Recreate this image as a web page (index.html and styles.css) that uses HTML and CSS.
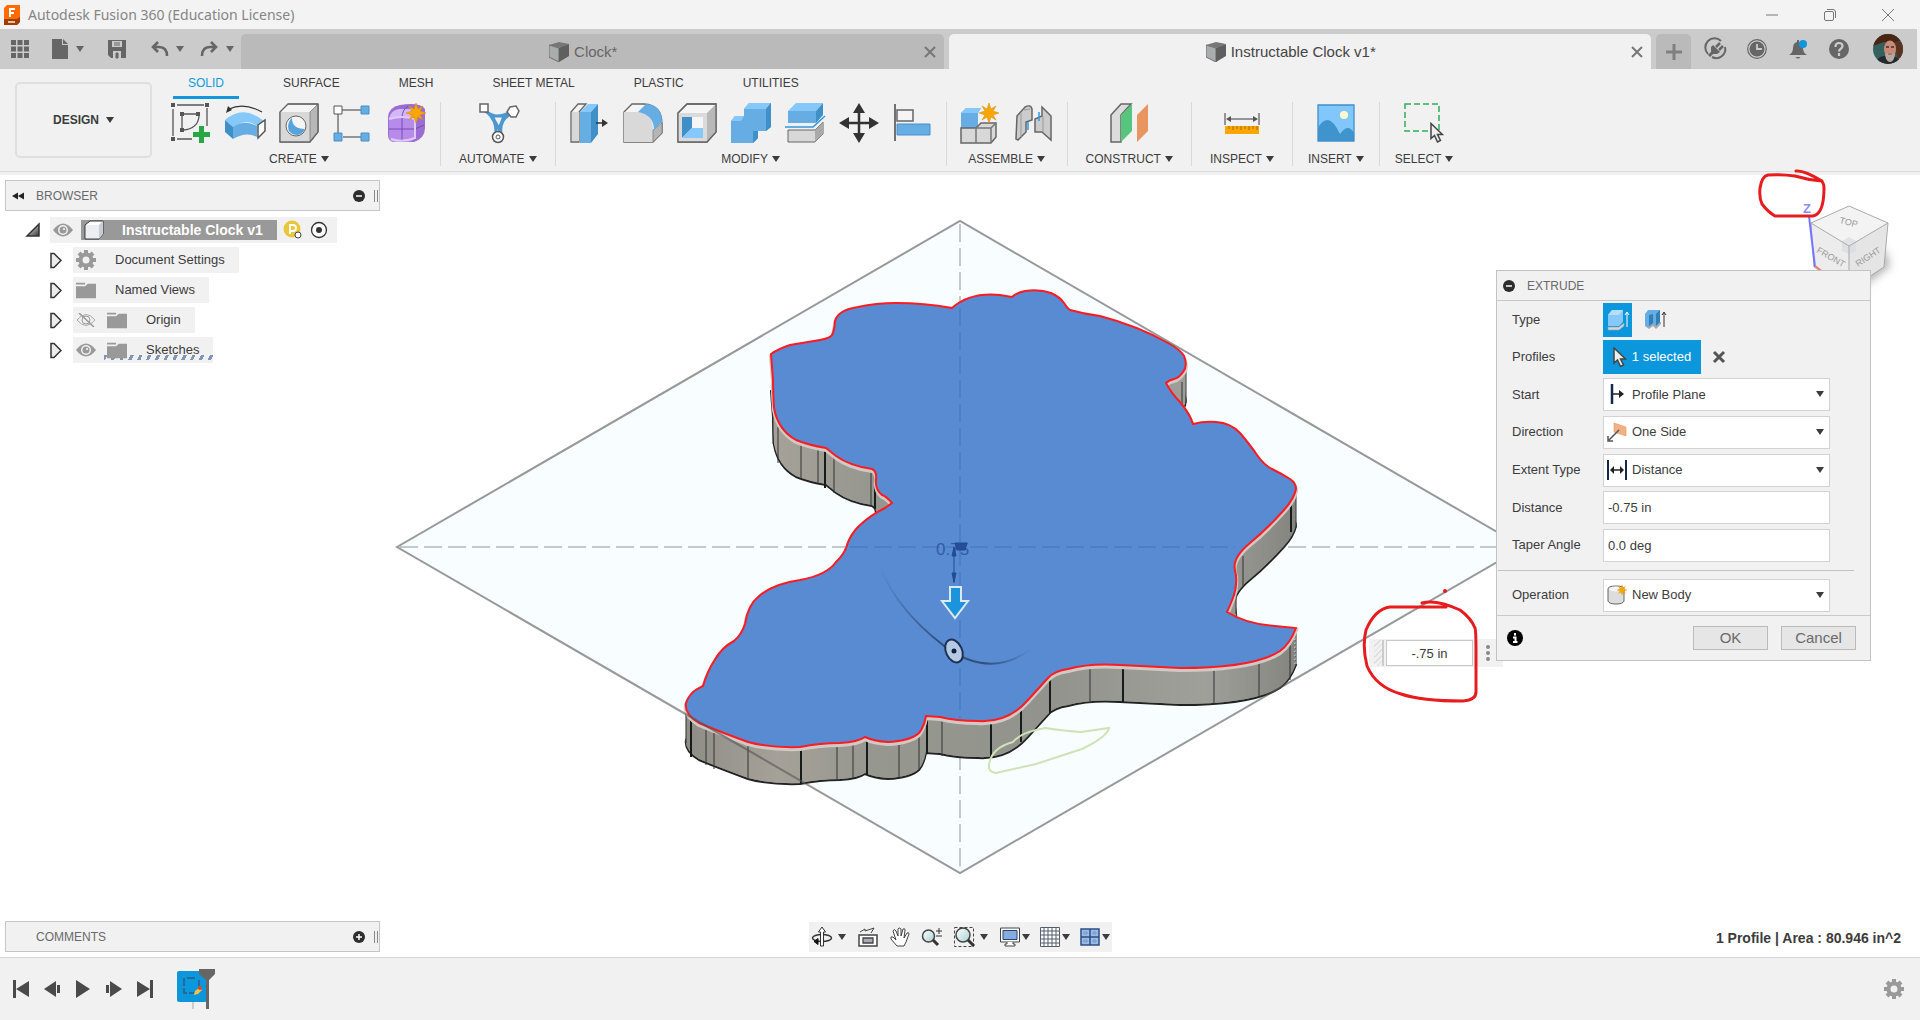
FILE: index.html
```html
<!DOCTYPE html>
<html lang="en">
<head>
<meta charset="utf-8">
<title>Autodesk Fusion 360 (Education License)</title>
<link rel="stylesheet" href="styles.css">
</head>
<body>
<svg class="defs" aria-hidden="true">
  <defs>
    <linearGradient id="steel" x1="0" y1="0" x2="1" y2="1"><stop offset="0" stop-color="#fff"/><stop offset="1" stop-color="#333"/></linearGradient>
    <linearGradient id="wall" x1="0" x2="1"><stop offset="0" stop-color="#8e8d86"/><stop offset=".15" stop-color="#a5a198"/><stop offset=".3" stop-color="#96978f"/><stop offset=".6" stop-color="#92938c"/><stop offset=".85" stop-color="#9fa099"/><stop offset="1" stop-color="#84857e"/></linearGradient>
    <linearGradient id="lens" x1="0" y1="0" x2="1" y2="1"><stop offset="0" stop-color="#fff"/><stop offset="1" stop-color="#a9cfd3"/></linearGradient>
    <linearGradient id="fade" x1="0" x2="1"><stop offset="0" stop-color="#304f7c" stop-opacity="0"/><stop offset=".4" stop-color="#304f7c"/><stop offset=".7" stop-color="#304f7c"/><stop offset="1" stop-color="#304f7c" stop-opacity="0"/></linearGradient>
    <symbol id="caret" viewBox="0 0 8 6"><path d="M0 0h8L4 6z" fill="currentColor"/></symbol>
    <symbol id="close" viewBox="0 0 12 12"><path d="M1 1l10 10M11 1L1 11" stroke="currentColor" stroke-width="2"/></symbol>
    <symbol id="star" viewBox="0 0 20 20"><path d="M10 0l2 6 5-3-3 5 6 2-6 2 3 5-5-3-2 6-2-6-5 3 3-5-6-2 6-2-3-5 5 3z" fill="#f9a602" stroke="#d98b00" stroke-width=".5"/></symbol>
    <symbol id="cube" viewBox="0 0 20 20"><path d="M0 3l10-3 10 2-9 4z" fill="#777"/><path d="M0 3l10 3v14L0 15z" fill="#a9adad" stroke="#6f6f6f"/><path d="M10 6l10-4v12l-10 6z" fill="#5f5f5f"/></symbol>
    <symbol id="folder" viewBox="0 0 22 18"><path d="M0 1h10v2H0zM0 5h10l3-3h9v16H0z" fill="#999"/></symbol>
    <symbol id="eye" viewBox="0 0 20 14"><path d="M0 7Q10-6 20 7 10 20 0 7z" fill="#999"/><circle cx="10" cy="7" r="5" fill="#f1f1f1"/><circle cx="10" cy="7" r="3.5" fill="#999"/><circle cx="11" cy="6" r="1" fill="#fff"/></symbol>
    <symbol id="eye-off" viewBox="0 0 20 14"><path d="M1 7Q10-4 19 7 10 18 1 7z" fill="none" stroke="#aaa"/><circle cx="10" cy="7" r="4" fill="none" stroke="#999"/><path d="M3 0l15 14" stroke="#999" stroke-width="1.5"/></symbol>
    <symbol id="gear" viewBox="0 0 20 20"><circle cx="10" cy="10" r="5.5" fill="none" stroke="#999" stroke-width="4"/><path d="M10 0v4M10 16v4M0 10h4M16 10h4M3 3l3 3M14 14l3 3M17 3l-3 3M3 17l3-3" stroke="#999" stroke-width="4"/></symbol>
    <symbol id="branch" viewBox="0 0 12 16"><path d="M1 1h3l7 7-7 7H1z" fill="#ececec" stroke="#333" stroke-width="1.5"/></symbol>
    <symbol id="minus" viewBox="0 0 12 12"><circle cx="6" cy="6" r="6" fill="#2d2d2d"/><path d="M3 6h6" stroke="#fff" stroke-width="1.5"/></symbol>
    <symbol id="plus" viewBox="0 0 12 12"><circle cx="6" cy="6" r="6" fill="#2d2d2d"/><path d="M3 6h6M6 3v6" stroke="#fff" stroke-width="1.5"/></symbol>
    <symbol id="pointer" viewBox="0 0 14 20"><path d="M1 1v15l3.500-3 3 6.500 3-1.500-3-6h5z" fill="#eee" stroke="#444" stroke-width="1.500"/></symbol>
  </defs>
</svg>

<div class="app">
  <header class="titlebar">
    <svg class="logo" viewBox="0 0 18 20"><path d="M1 3l3-3h13v17l-3 3H1z" fill="#ff6b00"/><path d="M1 14h13l3-2v5l-3 3H1z" fill="#a23c00"/><path d="M7 12V4h5M7 8h4" fill="none" stroke="#fff" stroke-width="2"/><path d="M5 17h7" stroke="#e9c4a8" stroke-width="2"/></svg>
    <span class="title">Autodesk Fusion 360 (Education License)</span>
    <div class="window-controls">
      <button aria-label="Minimize"><svg viewBox="0 0 12 12"><path d="M0 6h12" stroke="#777"/></svg></button>
      <button aria-label="Restore"><svg viewBox="0 0 12 12"><rect x=".5" y="2.500" width="9" height="9" rx="1.500" fill="none" stroke="#777"/><path d="M3 .5h6q2.500 0 2.500 2.500v6" fill="none" stroke="#777"/></svg></button>
      <button aria-label="Close"><svg viewBox="0 0 12 12"><path d="M0 0l12 12M12 0L0 12" stroke="#777"/></svg></button>
    </div>
  </header>

  <div class="docbar">
    <div class="quick">
      <button class="apps" aria-label="Data panel"><svg class="i20" viewBox="0 0 20 20"><path d="M1 1h5v5H1zM7.500 1h5v5h-5zM14 1h5v5h-5zM1 7.500h5v5H1zM7.500 7.500h5v5h-5zM14 7.500h5v5h-5zM1 14h5v5H1zM7.500 14h5v5h-5zM14 14h5v5h-5z" fill="#666"/></svg></button>
      <button aria-label="File"><svg class="i20" viewBox="0 0 20 20"><path d="M2 0h10v6h6v14H2z" fill="#666"/><path d="M13 0l5 5h-5z" fill="#666"/></svg><svg class="caret"><use href="#caret"/></svg></button>
      <button class="save" aria-label="Save"><svg class="i20" viewBox="0 0 20 20"><path d="M1 1h18v18H4l-3-3z" fill="#666"/><path d="M5 2h10v6H5zM6 12h8v7H6z" fill="#cbcbcb"/><path d="M7 4h6M7 6h6M9 14h2v5H9z" fill="#666" stroke="#666"/></svg></button>
      <button aria-label="Undo"><svg class="i20" viewBox="0 0 20 20"><path d="M8 3L3 8l5 5M4 8h5q8 0 8 9" fill="none" stroke="#666" stroke-width="2.600"/></svg><svg class="caret"><use href="#caret"/></svg></button>
      <button aria-label="Redo"><svg class="i20" viewBox="0 0 20 20"><path d="M11 3l5 5-5 5M15 8h-5Q2 8 2 17" fill="none" stroke="#666" stroke-width="2.600"/></svg><svg class="caret"><use href="#caret"/></svg></button>
    </div>
    <div class="doctab"><span class="doclabel"><svg class="i20"><use href="#cube"/></svg>Clock*</span><button class="x" aria-label="Close Clock"><svg><use href="#close"/></svg></button></div>
    <div class="doctab active"><span class="doclabel"><svg class="i20"><use href="#cube"/></svg>Instructable Clock v1*</span><button class="x" aria-label="Close Instructable Clock"><svg><use href="#close"/></svg></button></div>
    <button class="newtab" aria-label="New design"><svg viewBox="0 0 16 16"><path d="M8 0v16M0 8h16" stroke="#808080" stroke-width="3"/></svg></button>
    <div class="account">
      <button aria-label="Extensions"><svg class="i20" viewBox="0 0 20 20"><path d="M2 15A9 9 0 0 1 15 2M19 8A9 9 0 0 1 6 18" fill="none" stroke="#666" stroke-width="2"/><path d="M3 17l5-5" stroke="#666" stroke-width="3"/><path d="M7 6l7 7-3 2H7l-2-3V8z" fill="#666"/><path d="M10 8l4-4M13 11l4-4" stroke="#666" stroke-width="2.500"/></svg></button>
      <button aria-label="Job status"><svg class="i20" viewBox="0 0 20 20"><circle cx="10" cy="10" r="9.300" fill="none" stroke="#666" stroke-width="1.200"/><circle cx="10" cy="10" r="7.500" fill="#666"/><path d="M10 5v5h5" fill="none" stroke="#cbcbcb" stroke-width="1.800"/></svg></button>
      <button aria-label="Notifications"><svg class="i20" viewBox="0 0 20 20"><path d="M9 1h2v2q4 1 4 6 0 5 4 7H1q4-2 4-7 0-5 4-6zM7.500 18h5q-2.500 3-5 0z" fill="#666"/><circle cx="15" cy="5" r="4" fill="#0c96dc"/></svg></button>
      <button aria-label="Help"><svg class="i20" viewBox="0 0 20 20"><circle cx="10" cy="10" r="10" fill="#666"/><path d="M6.500 8q0-4 3.500-4t3.500 3q0 1.500-2 3-1.500 1-1.500 2.500M10 14v3" fill="none" stroke="#cbcbcb" stroke-width="2.200"/></svg></button>
      <button class="avatar" aria-label="Profile"><svg viewBox="0 0 30 30"><clipPath id="av"><circle cx="15" cy="15" r="15"/></clipPath><g clip-path="url(#av)"><path fill="#34605f" d="M0 0h30v30H0z"/><path fill="#4a2415" d="M0 0h30v6l-9 3-10-1-11 4z"/><path fill="#5a3220" d="M22 8h8v16h-6z"/><path fill="#222a30" d="M2 30q3-9 11-8h6q8 1 9 8z"/><ellipse cx="17" cy="15" rx="6" ry="8.500" fill="#c98b78"/><path d="M12 20q5-2 10 0-1 8-5 8t-5-8z" fill="#b9a8a0"/><path d="M13 13h3M18 13h3" stroke="#4a2b23" stroke-width="1.500"/><path d="M15 20h4" stroke="#8a4f45"/></g></svg></button>
    </div>
  </div>

  <div class="ribbon">
    <button class="workspace">DESIGN<svg class="caret"><use href="#caret"/></svg></button>
    <div class="ribbon-main">
      <nav class="ribbon-tabs">
        <a href="#" class="on">SOLID</a><a href="#">SURFACE</a><a href="#">MESH</a><a href="#">SHEET METAL</a><a href="#">PLASTIC</a><a href="#">UTILITIES</a>
      </nav>
      <div class="groups">
        <div class="group"><div class="tools">
          <button aria-label="Create Sketch"><svg viewBox="0 0 40 40"><path d="M6 2h27M36 5v18M2 6v27M6 36h15M13 11h13M11 13v13M12 27Q27 26 28 13" fill="none" stroke="#555" stroke-width="1.300"/><path d="M0 0h4v4H0zM34 0h4v4h-4zM0 34h4v4H0zM9 9h4v4H9zM25 9h4v4h-4zM9 25h4v4H9z" fill="#555"/><path d="M28 23h5v6h6v5h-6v6h-5v-6h-6v-5h6z" fill="#27a844"/></svg></button>
          <button aria-label="Revolve"><svg viewBox="0 0 40 40"><path d="M4 6q15-7 33 3" fill="none" stroke="#333" stroke-width="1.300"/><path d="M1 10L3 3l4 4z" fill="#333"/><path d="M0 17q18-16 39 1l-7 5q-12-9-23 2z" fill="#87c8fa"/><path d="M0 17l8 7v12l-8-7z" fill="#3f8fc9"/><path d="M8 24q12-8 24-1v11q-11-6-24 2z" fill="#66ade3"/><path d="M33 22l7-5v11l-7 7z" fill="#fff" stroke="#555" stroke-width="1.500"/></svg></button>
          <button aria-label="Hole"><svg viewBox="0 0 40 40"><path d="M1 9l8-8h30v28L31 39H1z" fill="#f4f4f4" stroke="#666"/><path d="M1 9h30v30H1z" fill="#d8d8d8"/><path d="M31 9l8-8v28l-8 10z" fill="#b7b7b7" stroke="#666" stroke-width=".6"/><path d="M1 9l8-8h30v28L31 39H1z" fill="none" stroke="#666" stroke-width="1.300"/><circle cx="17" cy="23" r="10" fill="#f5f5f5" stroke="#666"/><path d="M13 15q0 11 13 11-3 6-9 6-8-1-8-9 1-6 4-8z" fill="#58a3db"/></svg></button>
          <button aria-label="Pattern"><svg viewBox="0 0 40 40"><path d="M8 7h20M5 10v20M10 34h18" stroke="#777" stroke-width="1.500"/><path d="M1 3h8v8H1z" fill="#fff" stroke="#555"/><path d="M28 3h8v8h-8zM1 30h8v8H1zM28 30h8v8h-8z" fill="#66ade3" stroke="#4a8fc7"/></svg></button>
          <button aria-label="Create Form"><svg viewBox="0 0 40 40"><path d="M1 14Q2 4 13 2q20-3 25 4v19q0 10-11 14H8q-7 0-7-7z" fill="#9b6cd2"/><path d="M2 15q2-8 10-9h16q4 0 0 6-4 4-6 3z" fill="#d3b6f5"/><path d="M2 15h26v16q0 8-7 8H8q-6 0-6-6z" fill="#b68bea"/><path d="M15 15v24M2 26h26M28 26l9-4M15 15q0-8 6-12" fill="none" stroke="#7a4ab5"/><path d="M2 16q13-4 26 0M4 36q11 4 24-1V16" fill="none" stroke="#e0caf8" stroke-width="2"/><use href="#star" x="19" y="0" width="20" height="20"/></svg></button>
        </div><button class="glabel">CREATE<svg class="caret"><use href="#caret"/></svg></button></div>
        <div class="group"><div class="tools">
          <button aria-label="Automated Modeling"><svg viewBox="0 0 40 40"><path d="M7 8q7 5 12 5 7 0 13-4M9 9q10 9 9 22M31 12q-10 6-8 20M14 13h12l-5 13z" fill="none" stroke="#4b97cf" stroke-width="3"/><circle cx="20" cy="34" r="5.500" fill="#fff" stroke="#555" stroke-width="1.500"/><circle cx="20" cy="34" r="2" fill="none" stroke="#555"/><path d="M2 1h8v8H2zM29 9l3-5 6-1 3 5-3 6h-5z" fill="#fff" stroke="#666" stroke-width="1.500"/></svg></button>
        </div><button class="glabel">AUTOMATE<svg class="caret"><use href="#caret"/></svg></button></div>
        <div class="group"><div class="tools">
          <button aria-label="Press Pull"><svg viewBox="0 0 40 40"><path d="M10 39H2V9l7-8h8l-7 8z" fill="#f3f3f3" stroke="#666" stroke-width="1.300"/><path d="M3 9h7v29H3z" fill="#d8d8d8"/><path d="M11 9l8-8h10l-7 8z" fill="#87c8fa"/><path d="M11 9h11v31H11z" fill="#66ade3"/><path d="M22 9l7-8v30l-7 9z" fill="#3f8fc9"/><path d="M27 20h8" stroke="#333" stroke-width="1.500"/><path d="M33 16l6 4-6 4z" fill="#333"/></svg></button>
          <button aria-label="Fillet"><svg viewBox="0 0 40 40"><path d="M1 9l8-8h12q18 1 18 20v9l-9 9H1z" fill="#f5f5f5" stroke="#666" stroke-width="1.300"/><path d="M1 9h13q16 1 16 18v12H1z" fill="#d9d9d9"/><path d="M30 27l9-7v10l-9 9z" fill="#b5b5b5" stroke="#777" stroke-width=".7"/><path d="M15 9l8-8q16 1 16 18l-8 8q0-15-16-18z" fill="#66ade3"/></svg></button>
          <button aria-label="Shell"><svg viewBox="0 0 40 40"><path d="M1 10l9-9h29v28l-9 10H1z" fill="#f5f5f5" stroke="#666" stroke-width="1.300"/><path d="M1 10h29v29H1z" fill="#dadada"/><path d="M30 10l9-9v28l-9 10z" fill="#b8b8b8"/><path d="M1 10l9-9h29v28l-9 10H1z" fill="none" stroke="#666" stroke-width="1.300"/><path d="M5 14h21v21H5z" fill="#f5f5f5"/><path d="M5 14h10v11L5 35z" fill="#3f8fc9"/><path d="M5 35l10-10h11v10z" fill="#87c8fa"/></svg></button>
          <button aria-label="Combine"><svg viewBox="0 0 40 40"><path d="M0 18l4-5h9V6l5-6h22v24l-5 4h-8v7l-5 5H0z" fill="#66ade3"/><path d="M13 6l5-6h22l-5 6zM0 18l4-5h9l-3 5z" fill="#87c8fa"/><path d="M35 6l5-6v24l-5 4zM22 28h5v7l-5 5z" fill="#3f8fc9"/></svg></button>
          <button aria-label="Split Body"><svg viewBox="0 0 40 40"><path d="M3 8l8-8h27l-7 8z" fill="#87c8fa"/><path d="M3 8h28v12H3z" fill="#66ade3"/><path d="M31 8l7-8v12l-7 8z" fill="#3f8fc9"/><path d="M0 24h28l12-11" fill="none" stroke="#3396df" stroke-width="1.500"/><path d="M3 27h27l8-8v12l-8 8H3z" fill="#d8d8d8" stroke="#666"/><path d="M30 27l8-8v12l-8 8z" fill="#aaa"/></svg></button>
          <button aria-label="Move"><svg viewBox="0 0 40 40"><path d="M20 6v28M6 20h28" stroke="#333" stroke-width="2.500"/><path d="M20 0l6 10H14zM20 40l6-10H14zM0 20l10-6v12zM40 20l-10-6v12z" fill="#333"/></svg></button>
          <button aria-label="Align"><svg viewBox="0 0 40 40"><path d="M2 1v37" stroke="#444" stroke-width="1.500"/><path d="M4 7h16v11H4z" fill="#f5f5f5" stroke="#666" stroke-width="1.500"/><path d="M4 21h33v11H4z" fill="#66ade3" stroke="#4b90c8"/></svg></button>
        </div><button class="glabel">MODIFY<svg class="caret"><use href="#caret"/></svg></button></div>
        <div class="group"><div class="tools">
          <button aria-label="New Component"><svg viewBox="0 0 40 40"><path d="M1 10l5-5h15l-3 5v15H1z" fill="#66ade3"/><path d="M1 10l5-5h15l-3 5z" fill="#87c8fa"/><path d="M1 25h15l5-5h15v14l-5 6H1z" fill="#d8d8d8" stroke="#666" stroke-width="1.500"/><path d="M16 25h15v15M31 25l5-5M16 25v15" fill="none" stroke="#777" stroke-width="1.500"/><use href="#star" x="19" y="0" width="20" height="20"/></svg></button>
          <button aria-label="Joint"><svg viewBox="0 0 40 40"><path d="M3 13l8-9q6-3 7 2v11l-6 2v10l-8 8-2-1z" fill="#ccc" stroke="#666" stroke-width="1.500"/><path d="M28 4l9 9v24l-9-8h-7V16l7-3z" fill="#ccc" stroke="#666" stroke-width="1.500"/><path d="M7 10v24M10 7l6-1M29 13v16" fill="none" stroke="#999"/><path d="M14 19v8M25 9v9" stroke="#2b9ae5" stroke-width="1.500"/></svg></button>
        </div><button class="glabel">ASSEMBLE<svg class="caret"><use href="#caret"/></svg></button></div>
        <div class="group"><div class="tools">
          <button aria-label="Offset Plane"><svg viewBox="0 0 40 40"><path d="M2 39V12L12 1h10L12 12v27z" fill="#dcdcdc" stroke="#666" stroke-width="1.500"/><path d="M12 12L23 1v27L12 39z" fill="#58c57e"/><path d="M28 12L39 1v27L28 39z" fill="#e8955f"/></svg></button>
        </div><button class="glabel">CONSTRUCT<svg class="caret"><use href="#caret"/></svg></button></div>
        <div class="group"><div class="tools">
          <button aria-label="Measure"><svg viewBox="0 0 40 40"><path d="M3 10v12M37 10v12M6 16h28" stroke="#777" stroke-width="1.500"/><path d="M4 16l5-3v6zM36 16l-5-3v6z" fill="#555"/><path d="M3 23h34v8H3z" fill="#f9a602"/><path d="M7 23v3M11 23v4M15 23v3M19 23v4M23 23v3M27 23v4M31 23v3M35 23v4" stroke="#a86b00"/></svg></button>
        </div><button class="glabel">INSPECT<svg class="caret"><use href="#caret"/></svg></button></div>
        <div class="group compact"><div class="tools">
          <button aria-label="Insert Canvas"><svg viewBox="0 0 40 40"><path d="M2 2h36v36H2z" fill="#82c7fc"/><path d="M2 25q4-8 10-8 5 0 12 14 5-7 8-6 3 0 6 5v8H2z" fill="#4094cd"/><circle cx="28" cy="12" r="4" fill="#fffbd1"/><path d="M2 2h36v36H2z" fill="none" stroke="#3f8fc9" stroke-width="1.300"/></svg></button>
        </div><button class="glabel">INSERT<svg class="caret"><use href="#caret"/></svg></button></div>
        <div class="group compact"><div class="tools">
          <button aria-label="Select"><svg viewBox="0 0 40 40"><path d="M1 1h34v27H1z" fill="none" stroke="#2fae5c" stroke-width="1.500" stroke-dasharray="6 3"/><use href="#pointer" x="26" y="19" width="14" height="21"/></svg></button>
        </div><button class="glabel">SELECT<svg class="caret"><use href="#caret"/></svg></button></div>
      </div>
    </div>
  </div>

  <main class="canvas">
    <svg class="scene" viewBox="0 175 1920 782" preserveAspectRatio="xMidYMid meet">
      <defs>
        <path id="top" d="M771 354Q778 349 790 345 808 342 820 340 832 338 833 333 835 326 835 321 838 310 858 307 876 303 896 303 924 303 952 308 970 292 1000 295L1012 297Q1016 293 1025 291 1040 289 1051 293 1060 297 1064 303 1067 308 1070 310 1084 314 1100 316 1138 326 1168 343 1181 350 1184 356 1188 366 1183 372 1179 378 1174 379 1169 380 1166 383 1172 394 1180 402 1190 414 1193 424 1204 421 1216 422 1231 423 1240 433 1251 446 1257 455 1264 465 1272 469 1282 474 1290 479 1296 483 1296 489 1294 499 1284 510 1266 530 1250 543 1232 558 1235 570 1238 582 1234 595 1230 606 1227 612 1246 624 1275 626L1296 628Q1290 644 1280 651 1254 668 1180 668 1140 666 1120 665 1090 663 1068 669 1054 671 1048 678 1038 689 1028 700 1008 723 978 721 956 721 940 717L926 716Q924 727 919 733 910 741 888 742 873 741 865 737 858 742 840 743 820 743 800 747 770 748 748 742 718 731 699 723 684 714 686 703 689 694 697 689L703 686Q707 672 714 661 722 647 734 641 742 634 745 624 748 605 758 597 772 584 800 580 827 575 836 562 844 554 846 548 850 534 860 525 872 514 885 508L892 503Q886 496 882 495 875 489 876 480 877 471 872 469 850 466 836 456L826 448Q808 445 796 440 778 430 774 408 773 392 773 380z"/>
      </defs>
      <path class="plane" d="M397 547L960 221l563 326-563 326z"/>
      <path class="axis" d="M400 547h1120M960 224v646"/>
      <g fill="url(#wall)">
        <use class="rim" href="#top" y="37"/><use href="#top" y="36"/><use href="#top" y="32"/><use href="#top" y="28"/><use href="#top" y="24"/><use href="#top" y="20"/><use href="#top" y="16"/><use href="#top" y="12"/><use href="#top" y="8"/><use href="#top" y="4"/>
      </g>
      <path class="seam" d="M686 706v37M706 728v37M714 732v37M748 744v36M837 745v36M853 743v35M899 743v36M919 734v36M942 720v36M1090 668v35M1214 669v36M1259 662v35M1290 644v36M1296 628v37M778 427v36M773 408v36M801 444v35M818 449v34M834 457v36M871 470v37M1182 382v22M1186 370v33M1296 490v38M1243 556v30M1236 594v20"/>
      <path class="seam bold" d="M691 719v38M801 749v35M867 741v34M927 720v34M991 723v34M1021 708v34M1050 679v34M1123 667v35M825 451v37M875 472v37M1291 502v30"/>
      <use class="lip" href="#top" y="2"/>
      <use class="face" href="#top"/>
      <path class="axis inner" d="M850 547h385M960 308v410"/>
      <path class="plane-edge" d="M397 547L960 221l563 326-563 326z"/>
      <path class="island" d="M989 765q2-17 24-23 8-10 32-14 20 3 36 4l28-4q-2 9-27 21l-46 15-40 9q-8-1-7-8z"/>
      <g class="dim"><text x="936" y="555">0.75</text><path d="M954 553v30M952 573l2 9 2-9zM952 556l2-9 2 9zM955 543h12l-2 7h-8z"/></g>
      <path class="arc" d="M879 565q18 45 64 80 8 8 24 14 34 13 64-10"/>
      <path d="M950 587h11v14h7l-13 17-13-17h8z" fill="#1c94db" stroke="#dce9f5" stroke-width="2"/>
      <ellipse cx="954" cy="651" rx="8" ry="12" transform="rotate(-25 954 651)" fill="#b5c9e4" stroke="#1d3153" stroke-width="2"/><circle cx="954" cy="651" r="2.500" fill="#12223d"/>
    </svg>

    <svg class="viewcube" viewBox="1796 195 110 95">
      <defs><filter id="soft" x="-30%" y="-30%" width="160%" height="160%"><feGaussianBlur stdDeviation="5"/></filter></defs>
      <path d="M1822 262l38 26 30-22-6-16z" fill="#aaa" filter="url(#soft)"/>
      <path d="M1811 223l38-17 39 17-39 23z" fill="#f3f3f3"/><path d="M1811 223l38 23v44l-35-23z" fill="#ececec"/><path d="M1888 223l-39 23v44l35-23z" fill="#e5e5e5"/>
      <path d="M1842 241l7-4 7 4v10l-7 3-7-3z" fill="#d5d9df" opacity=".6"/>
      <path d="M1811 223l38-17 39 17-4 44-35 23-35-23zM1811 223l38 23 39-23M1849 246v44" fill="none" stroke="#aaa"/>
      <path d="M1809 216l6 51" stroke="#7474ff" stroke-width="2"/><path d="M1815 266l8 6" stroke="#ee7b7b" stroke-width="2"/>
      <text class="z" x="1803" y="213">Z</text>
      <g class="facename"><text transform="translate(1839 223) rotate(14)">TOP</text><text transform="translate(1816 252) rotate(30)">FRONT</text><text transform="translate(1858 267) rotate(-33)">RIGHT</text></g>
    </svg>

    <aside class="side">
      <section>
        <h2 class="panelbar"><svg class="rewind" viewBox="0 0 14 8"><path d="M7 0v8L0 4zM14 0v8L7 4z" fill="#222"/></svg><span>BROWSER</span><svg class="badge"><use href="#minus"/></svg><i class="grip"></i></h2>
        <ul class="tree">
          <li class="root"><svg class="open" viewBox="0 0 14 14"><path d="M1 13L13 1v12z" fill="url(#steel)" stroke="#333" stroke-width="1.500"/></svg>
            <div class="node"><svg class="eye"><use href="#eye"/></svg><span class="rootname"><svg class="i20" viewBox="0 0 20 20"><path d="M1 5l5-4h13v13l-4 5H1z" fill="#fff" stroke="#333"/><path d="M15 5l4-4v13l-4 5z" fill="#c9ccd2"/><path d="M2 5h13v13H2z" fill="#eceef3"/></svg>Instructable Clock v1</span><svg class="i20" viewBox="0 0 20 20"><circle cx="9" cy="9" r="8.500" fill="#e8c73c"/><path d="M7 14V5h3q3 0 3 3t-3 3H7" fill="none" stroke="#fff" stroke-width="1.800"/><circle cx="15" cy="15" r="3" fill="#fff" stroke="#444"/></svg><svg class="i20" viewBox="0 0 20 20"><circle cx="10" cy="10" r="7.500" fill="#fff" stroke="#333" stroke-width="1.300"/><circle cx="10" cy="10" r="3" fill="#333"/></svg></div></li>
          <li><svg class="tw"><use href="#branch"/></svg><div class="node"><svg class="i20"><use href="#gear"/></svg><span>Document Settings</span></div></li>
          <li><svg class="tw"><use href="#branch"/></svg><div class="node"><svg class="i20"><use href="#folder"/></svg><span>Named Views</span></div></li>
          <li><svg class="tw"><use href="#branch"/></svg><div class="node"><svg class="eye"><use href="#eye-off"/></svg><svg class="i20"><use href="#folder"/></svg><span>Origin</span></div></li>
          <li><svg class="tw"><use href="#branch"/></svg><div class="node sketches"><svg class="eye"><use href="#eye"/></svg><svg class="i20"><use href="#folder"/></svg><span>Sketches</span></div></li>
        </ul>
      </section>
      <h2 class="panelbar"><svg class="rewind" viewBox="0 0 14 8"></svg><span>COMMENTS</span><svg class="badge"><use href="#plus"/></svg><i class="grip"></i></h2>
    </aside>

    <div class="navbar">
      <button aria-label="Orbit"><svg class="i20" viewBox="0 0 20 20"><ellipse cx="10" cy="11" rx="9.500" ry="3.500" fill="none" stroke="#333" stroke-width="1.500"/><path d="M8.500 19V5h-2l3.500-5 3.500 5h-2v14z" fill="#fff" stroke="#333"/><path d="M2 14.500l4-3v6z" fill="#111" stroke="#111"/></svg><svg class="caret"><use href="#caret"/></svg></button>
      <button aria-label="Look At"><svg class="i20" viewBox="0 0 20 20"><path d="M1 8h18v11H1z" fill="#fff" stroke="#444" stroke-width="1.500"/><path d="M5 11h10v5H5z" fill="#aab" stroke="#444" stroke-width="1.300"/><path d="M2 5l5-3v2l9-3-3 5" fill="none" stroke="#444"/></svg></button>
      <button aria-label="Pan"><svg class="i20" viewBox="0 0 20 20"><path d="M7 19L1 12q-1-3 2-2l3 3L3 4q1-3 3 0l2 5V2q1-2 3 0v7l2-7q2-1 2 1l-1 8 3-5q2-1 2 1l-3 8-2 4z" fill="#fff" stroke="#444"/></svg></button>
      <button aria-label="Zoom"><svg class="i20" viewBox="0 0 20 20"><circle cx="6.500" cy="9" r="6" fill="url(#lens)" stroke="#444" stroke-width="1.500"/><path d="M11 13l5 5" stroke="#333" stroke-width="3"/><path d="M14 4h6M17 1v6M14 9h6" stroke="#333"/></svg></button>
      <button aria-label="Fit"><svg class="i20" viewBox="0 0 20 20"><path d="M.5 .5h19v19H.5z" fill="none" stroke="#444" stroke-dasharray="3 2"/><circle cx="9" cy="8" r="7" fill="url(#lens)" stroke="#444" stroke-width="1.500"/><path d="M14 13l6 6" stroke="#333" stroke-width="3"/></svg><svg class="caret"><use href="#caret"/></svg></button>
      <button class="tight" aria-label="Display Settings"><svg class="i20" viewBox="0 0 20 20"><path d="M.5 1h19v14H.5z" fill="#fff" stroke="#444"/><path d="M3 3.500h14v9H3z" fill="#86ace0" stroke="#284474"/><path d="M7 15v2H5v2h10v-2h-2v-2" fill="#fff" stroke="#444"/></svg><svg class="caret"><use href="#caret"/></svg></button>
      <button class="tight" aria-label="Grid"><svg class="i20" viewBox="0 0 20 20"><path d="M.5 .5h19v19H.5z" fill="#fff"/><path d="M4 0v20M8 0v20M12 0v20M16 0v20M0 4h20M0 8h20M0 12h20M0 16h20M.5 .5h19v19H.5z" fill="none" stroke="#555e6c"/></svg><svg class="caret"><use href="#caret"/></svg></button>
      <button class="tight" aria-label="Viewports"><svg class="i20" viewBox="0 0 20 20"><path d="M1 2h18v16H1z" fill="#9bbce6" stroke="#2d4f87" stroke-width="1.500"/><path d="M10 2v16M1 10h18" stroke="#2d4f87" stroke-width="1.500"/><path d="M4 5h3v2H4zM13 5h3v2h-3zM4 13h3v2H4zM13 13h3v2h-3z" fill="none" stroke="#7597cb"/></svg><svg class="caret"><use href="#caret"/></svg></button>
    </div>
    <p class="status">1 Profile | Area : 80.946 in^2</p>

    <div class="mini"><i class="hatch"></i><input aria-label="Distance value" value="-.75 in"><svg viewBox="0 0 4 16"><circle cx="2" cy="2" r="2"/><circle cx="2" cy="8" r="2"/><circle cx="2" cy="14" r="2"/></svg></div>

    <form class="dialog">
      <h2><svg class="badge"><use href="#minus"/></svg>EXTRUDE</h2>
      <div class="fields">
        <div class="row"><span>Type</span><div class="types">
          <button type="button" class="type on" aria-label="Extrude"><svg viewBox="0 0 20 20"><path d="M0 17v3h11l5-4v-3l-5 4z" fill="#d5d5d5" stroke="#8fa5b3" stroke-width=".6"/><path d="M0 5l4-5h11v12l-4 4H0z" fill="#87c8fa"/><path d="M0 5l4-5h11l-4 5z" fill="#b5defc"/><path d="M19 17V3M17 5l2-3 2 3" fill="none" stroke="#fff"/></svg></button>
          <button type="button" class="type" aria-label="Thin Extrude"><svg viewBox="0 0 20 20"><path d="M0 16l4 3 4-3 3 3 5-5v-2H0z" fill="#aaa"/><path d="M0 4l3-4h12v12l-4 4-3-2-4 3-4-1z" fill="#66ade3"/><path d="M4 5v11l4-3V4zM11 4l4-4v12l-4 4z" fill="#2f7fb8"/><path d="M19 17V3M17 5l2-3 2 3" fill="none" stroke="#333"/></svg></button></div></div>
        <div class="row"><span>Profiles</span><div class="types"><button type="button" class="selected"><svg><use href="#pointer"/></svg>1 selected</button><button type="button" class="clear" aria-label="Clear"><svg viewBox="0 0 12 12"><path d="M1 1l10 10M11 1L1 11" stroke="#555" stroke-width="3"/></svg></button></div></div>
        <div class="row"><label for="start">Start</label><div class="pick"><svg class="i20" viewBox="0 0 20 20"><path d="M5 0v20" stroke="#14284b" stroke-width="2.500"/><path d="M6 10h9" stroke="#222" stroke-width="1.500"/><path d="M12 6l5 4-5 4z" fill="#222"/></svg><select id="start"><option>Profile Plane</option></select><svg class="caret"><use href="#caret"/></svg></div></div>
        <div class="row"><label for="direction">Direction</label><div class="pick"><svg class="i20" viewBox="0 0 20 20"><path d="M7 1l12 4v9L7 10z" fill="#f3b083" stroke="#e39b69" stroke-width=".6"/><path d="M12 8L2 18M1 14v5h5" fill="none" stroke="#555" stroke-width="1.500"/></svg><select id="direction"><option>One Side</option></select><svg class="caret"><use href="#caret"/></svg></div></div>
        <div class="row"><label for="extent">Extent Type</label><div class="pick"><svg class="i20" viewBox="0 0 20 20"><path d="M1 0v20M19 0v20" stroke="#14284b" stroke-width="2"/><path d="M4 10h12" stroke="#222" stroke-width="1.500"/><path d="M3 10l4-4v8zM17 10l-4-4v8z" fill="#222"/></svg><select id="extent"><option>Distance</option></select><svg class="caret"><use href="#caret"/></svg></div></div>
        <div class="row"><label for="distance">Distance</label><input id="distance" value="-0.75 in"></div>
        <div class="row"><label for="taper">Taper Angle</label><input id="taper" value="0.0 deg"></div>
      </div>
      <div class="operation row"><label for="operation">Operation</label><div class="pick"><svg class="i20" viewBox="0 0 20 20"><path d="M1 4q0-3 8-3t8 3v12q-1 3-8 3t-8-3z" fill="#ddd" stroke="#666"/><ellipse cx="9" cy="4" rx="7" ry="2.500" fill="#f5f5f5"/><use href="#star" x="10" y="0" width="10" height="10"/></svg><select id="operation"><option>New Body</option></select><svg class="caret"><use href="#caret"/></svg></div></div>
      <footer><svg class="info" viewBox="0 0 16 16"><circle cx="8" cy="8" r="8"/><path d="M8 3v2.500M6 7.500h2.500V12M6 12h4.500" fill="none" stroke="#fff" stroke-width="2"/></svg><button type="button">OK</button><button type="button">Cancel</button></footer>
    </form>

    <svg class="markup" viewBox="0 175 1920 782" preserveAspectRatio="xMidYMid meet"><path d="M1796 171q8-1 26 10-14-1-27-5-14-2-27-1-6 1-8 13-1 10 2 16 6 8 13 12h38q11-2 11-28 0-6-4-8M1446 607h-56q-15 2-24 23-4 16 1 36 9 21 34 28 20 7 62 7 13-1 13-9v-40q0-22-1-24-4-10-15-18-24-11-38-7"/><circle cx="1445" cy="591" r="2"/></svg>
  </main>

  <footer class="timeline">
    <div class="playback">
      <button aria-label="To start"><svg viewBox="0 0 16 18"><path d="M0 0h3v18H0zM16 1v16L3 9z"/></svg></button>
      <button aria-label="Step back"><svg viewBox="0 0 16 18"><path d="M12 1v16L0 9zM13 5h3v8h-3z"/></svg></button>
      <button aria-label="Play"><svg viewBox="0 0 16 18"><path d="M1 0v18l14-9z"/></svg></button>
      <button aria-label="Step forward"><svg viewBox="0 0 16 18"><path d="M4 1v16l12-8zM0 5h3v8H0z"/></svg></button>
      <button aria-label="To end"><svg viewBox="0 0 16 18"><path d="M0 1v16l13-8zM13 0h3v18h-3z"/></svg></button>
    </div>
    <button class="feature" aria-label="Sketch1"><svg viewBox="0 0 38 40"><path d="M16 30v10" stroke="#ccc" stroke-width="2"/><rect y="2" width="30" height="31" rx="2" fill="#0c96dc"/><path d="M7 9v15h10M10 9h10M22 11v6" fill="none" stroke="#2d5f7e" stroke-width="1.500" stroke-dasharray="8 2"/><path d="M17 26l1-4 5-4 2 3-4 4z" fill="#f2c14b"/><circle cx="23" cy="19" r="2" fill="#e5402e"/><path d="M22 0h16v5l-6 6v29h-3V11l-7-6z" fill="#666"/></svg></button>
    <button class="settings" aria-label="Timeline settings"><svg class="i20"><use href="#gear"/></svg></button>
  </footer>
</div>
</body>
</html>
```
FILE: styles.css
```css
* { box-sizing: border-box; }
body { margin: 0; background: #f1f1f1; color: #3c3c3c; font: 13px/16px "Liberation Sans", Arial, sans-serif; }
button, input, select { font: inherit; color: inherit; margin: 0; }
button { border: 0; background: none; padding: 0; display: flex; align-items: center; justify-content: center; }
h2, p, ul { margin: 0; padding: 0; font-weight: normal; }
svg { display: block; flex: none; overflow: visible; }
.defs { position: absolute; width: 0; height: 0; }
.i20 { width: 20px; height: 20px; }
.caret { width: 8px; height: 6px; }
.app { min-height: 100vh; display: flex; flex-direction: column; }

.titlebar { height: 29px; display: flex; align-items: center; padding: 0 3px; gap: 7px; background: #f3f3f3; }
.logo { width: 18px; height: 20px; }
.title { flex: 1; font: 14px/20px "Noto Sans", "Open Sans", sans-serif; color: #858585; }
.window-controls { display: flex; }
.window-controls button { width: 58px; height: 28px; }
.window-controls svg { width: 12px; height: 12px; }

.docbar { height: 40px; margin-right: 3px; padding-top: 5px; display: flex; background: #cbcbcb; color: #666; }
.quick { width: 241px; padding: 0 6px 5px; display: flex; gap: 16px; }
.quick button { gap: 6px; width: 34px; }
.quick .apps { width: 28px; }
.doctab { flex: 1; display: flex; align-items: center; padding: 0 4px 0 6px; background: #bababa; border-radius: 5px 5px 0 0; font-size: 15px; }
.doctab.active { margin-left: 5px; background: #f1f1f1; color: #444; }
.doclabel { flex: 1; display: flex; justify-content: center; gap: 5px; line-height: 20px; }
.x { width: 20px; height: 20px; color: #777; }
.x svg { width: 12px; height: 12px; }
.newtab { width: 35px; margin-left: 5px; background: #bababa; border-radius: 5px 5px 0 0; }
.newtab svg { width: 16px; height: 16px; }
.account { width: 226px; display: flex; gap: 21px; padding: 0 13px 5px 15px; }
.account button { flex: none; }
.account .avatar { margin-left: 3px; }
.avatar svg { width: 30px; height: 30px; }

.ribbon { height: 106px; display: flex; align-items: flex-start; gap: 6px; padding-left: 15px; background: #f1f1f1; border-bottom: 3px solid #f1f1f1; box-shadow: inset 0 -1px #dadada; font-size: 12px; }
.workspace { width: 137px; height: 76px; margin-top: 13px; gap: 7px; border: 2px solid #dfdfdf; border-radius: 5px; font-weight: bold; }
.ribbon-tabs { display: flex; gap: 29px; padding-left: 15px; height: 30px; }
.ribbon-tabs a { color: inherit; text-decoration: none; padding: 6px 15px 5px; border-bottom: 3px solid transparent; }
.ribbon-tabs .on { color: #0f9bdf; border-color: #1296dc; }
.groups { display: flex; padding-top: 3px; }
.group { border-right: 1px solid #d9d9d9; height: 64px; }
.group:last-child { border: 0; }
.tools { display: flex; justify-content: center; padding: 0 6px; height: 42px; }
.tools button { width: 54px; height: 42px; }
.tools svg { width: 40px; height: 40px; }
.glabel { width: 100%; height: 30px; padding: 0 18px; gap: 4px; }
.compact .glabel { padding: 0 15px; }

.canvas { position: relative; flex: 1; min-height: 600px; display: grid; grid-template-columns: 1fr auto 1fr; align-items: end; padding: 5px; background: #fff; }
.scene, .markup { position: absolute; left: 0; top: 0; width: 100%; height: 100%; }
.plane { fill: #f8feff; }
.plane-edge { fill: none; stroke: #555; stroke-opacity: .6; stroke-width: 2; }
.axis { fill: none; stroke: #c3c8c8; stroke-width: 2; stroke-dasharray: 18 6; }
.axis.inner { stroke: #4473b9; stroke-width: 1; }
.rim { stroke: #222; stroke-width: 2; }
.seam { fill: none; stroke: #333; stroke-width: 1; }
.seam.bold { stroke: #181b1b; stroke-width: 2; }
.lip { fill: none; stroke: #d3c9c4; stroke-width: 4; }
.face { fill: #598bd3; stroke: #fa1c22; stroke-width: 2; }
.island { fill: none; stroke: #cfe2b8; stroke-width: 2; }
.dim { fill: #254f99; stroke: none; }
.dim text { font: 17px "Liberation Sans", Arial, sans-serif; fill: #315ca5; }
.dim path { stroke: #204a94; }
.arc { fill: none; stroke: url(#fade); stroke-width: 2; }
.markup { pointer-events: none; fill: none; stroke: #e71c1e; stroke-width: 3; stroke-linecap: round; stroke-linejoin: round; }
.markup circle { fill: #e71c1e; stroke: none; }
.viewcube { position: absolute; right: 14px; top: 20px; width: 110px; height: 95px; }
.z { font: bold 13px "Liberation Sans", Arial, sans-serif; fill: #8d8dfa; }
.facename { font: 9px "Liberation Sans", Arial, sans-serif; fill: #999; }

.side { position: relative; width: 375px; align-self: stretch; display: flex; flex-direction: column; justify-content: space-between; }
.panelbar { height: 31px; display: flex; align-items: center; padding: 0 1px 0 6px; border: 1px solid #c6c6c6; background: #f1f1f1; color: #6a6a6a; font-size: 12px; line-height: 16px; }
.panelbar span { flex: 1; padding-left: 12px; }
.rewind { width: 12px; height: 8px; }
.badge { width: 12px; height: 12px; }
.grip { width: 4px; height: 12px; margin-left: 9px; border: solid #888; border-width: 0 1px; }
.tree { list-style: none; padding-top: 6px; display: flex; flex-direction: column; gap: 4px; }
.tree li { display: flex; align-items: center; gap: 11px; padding-left: 45px; height: 26px; }
.tree .root { padding-left: 21px; gap: 10px; }
.node { display: flex; align-items: center; gap: 11px; height: 26px; padding: 0 14px 0 3px; background: #f1f1f1; }
.node > span { padding-left: 8px; }
.eye { width: 20px; height: 14px; }
.tw { width: 12px; height: 17px; }
.open { width: 14px; height: 14px; }
.root .node { gap: 6px; padding-right: 8px; }
.root .node .rootname { display: flex; align-items: center; gap: 18px; height: 20px; margin-left: 2px; padding: 0 14px 0 3px; background: #999; color: #fff; font-weight: bold; font-size: 14px; }
.sketches { background: repeating-linear-gradient(115deg, #8194b5 0 3px, transparent 3px 8px) 31px 18px / 110px 5px no-repeat #f1f1f1; }

.navbar { position: relative; display: flex; align-items: center; gap: 12px; height: 30px; padding: 0 4px 0 3px; background: #f1f1f1; }
.navbar button { gap: 6px; height: 30px; }
.navbar .tight { gap: 2px; margin-right: -2px; }
.status { position: relative; padding: 0 14px 6px 0; text-align: right; font-weight: bold; font-size: 14px; }

.mini { position: absolute; right: 417px; top: 464px; display: flex; align-items: center; gap: 2px; width: 134px; height: 28px; padding-left: 5px; background: #f1f1f1; }
.hatch { width: 10px; height: 26px; border-right: 2px solid #ccc; background: repeating-linear-gradient(135deg, #ddd 0 1px, transparent 1px 4px); }
.mini input { width: 87px; height: 26px; border: 1px solid #c8c8c8; text-align: center; padding: 0; }
.mini svg { width: 4px; height: 16px; margin-left: 11px; fill: #888; }

.dialog { position: absolute; right: 49px; top: 95px; width: 375px; height: 391px; display: flex; flex-direction: column; border: 1px solid #c3c3c3; background: #f1f1f1; }
.dialog h2 { display: flex; align-items: center; gap: 12px; height: 30px; padding: 0 6px; border-bottom: 1px solid #c9c9c9; color: #6a6a6a; font-size: 12px; }
.fields { display: grid; grid-auto-rows: 1fr; height: 270px; margin: 0 16px 0 1px; padding-bottom: 6px; border-bottom: 1px solid #c3c3c3; }
.row { display: grid; grid-template-columns: 91px 227px; align-items: center; padding-left: 14px; }
.types { display: flex; gap: 8px; }
.type { width: 29px; height: 34px; }
.type svg { width: 20px; height: 20px; }
.on.type, .selected { background: #0c96dc; }
.selected { width: 98px; height: 34px; gap: 5px; color: #fff; }
.selected svg { width: 14px; height: 20px; }
.clear svg { width: 12px; height: 12px; }
.clear { width: 20px; color: #555; }
.pick { position: relative; }
.pick select, .row input { display: block; width: 227px; height: 33px; padding: 0 4px; border: 1px solid #d3d3d3; border-radius: 0; background: #fff; appearance: none; }
.pick select { padding-left: 28px; }
.pick .i20 { position: absolute; left: 4px; top: 6px; }
.pick .caret { position: absolute; right: 6px; top: 13px; }
.operation { height: 44px; padding: 4px 0 0 15px; }
.dialog footer { flex: 1; display: flex; align-items: center; gap: 13px; padding: 0 14px 0 10px; border-top: 1px solid #c9c9c9; }
.info { width: 16px; height: 16px; margin-right: auto; }
.dialog footer button { width: 75px; height: 24px; border: 1px solid #bbb; background: #e6e6e6; color: #6a6a6a; font-size: 15px; }

.timeline { height: 63px; display: flex; align-items: center; padding: 0 16px 0 13px; border-top: 1px solid #d6d6d6; background: #f1f1f1; }
.playback { display: flex; gap: 15px; }
.playback svg { width: 16px; height: 18px; fill: #4a4a4a; }
.feature { margin-left: 24px; }
.feature svg { width: 38px; height: 40px; }
.settings { margin-left: auto; }
```
